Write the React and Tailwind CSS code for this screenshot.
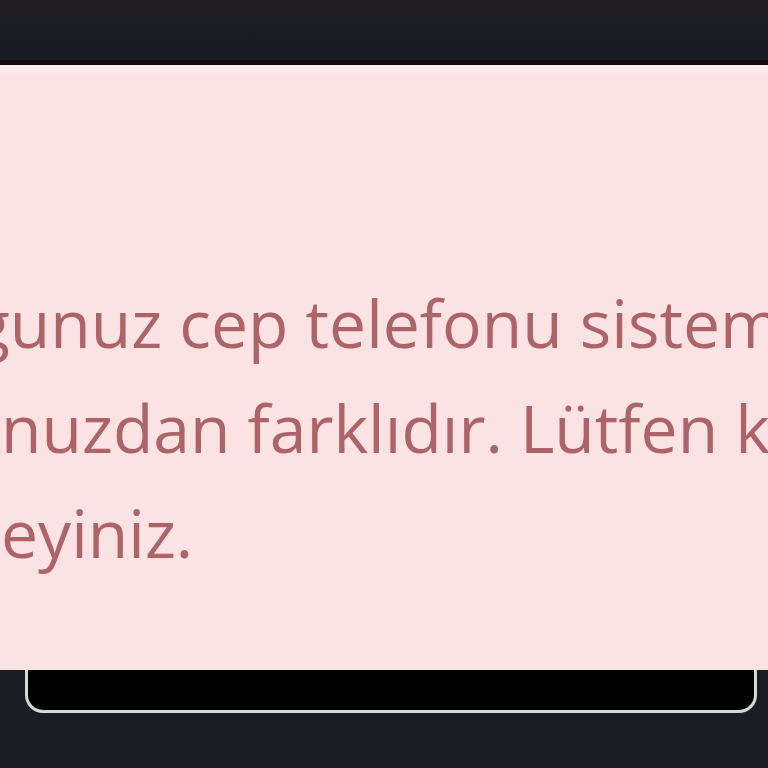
import React from "react";

const lines = [
  { text: "gunuz cep telefonu sistem", shift: "-ml-[26px]" },
  { text: "nuzdan farklıdır. Lütfen k", shift: "ml-[1px]" },
  { text: "eyiniz.", shift: "ml-[1px]" },
];

const App = () => {
  return (
    <div className="w-[768px] h-[768px] overflow-hidden flex flex-col bg-[#1c1d22]" style={{ fontFamily: '"Open Sans", "Noto Sans", sans-serif' }}>
      {/* header strip */}
      <div className="h-[60px] shrink-0 bg-gradient-to-b from-[#1f1d21] to-[#181c25]" />
      <div className="h-[5px] shrink-0 bg-[#130b0b]" />

      {/* alert */}
      <div className="h-[605px] shrink-0 bg-[#fbe3e3] overflow-hidden">
        <div className="h-[14px] bg-gradient-to-b from-[#fff0f0] to-[#fbe3e3]" />
        <div className="pt-[191px] text-[66px] leading-[105px] text-[#ad6468]">
          {lines.map((l) => (
            <div key={l.text} className={"whitespace-nowrap " + l.shift}>
              {l.text}
            </div>
          ))}
        </div>
      </div>

      {/* button under the alert */}
      <div className="flex pl-[25px] pr-[11px]">
        <div className="flex-1 h-[43px] bg-black border-x-[3px] border-b-[3px] border-[#d8d8d8] rounded-b-[18px]" />
      </div>
    </div>
  );
};

export default App;
